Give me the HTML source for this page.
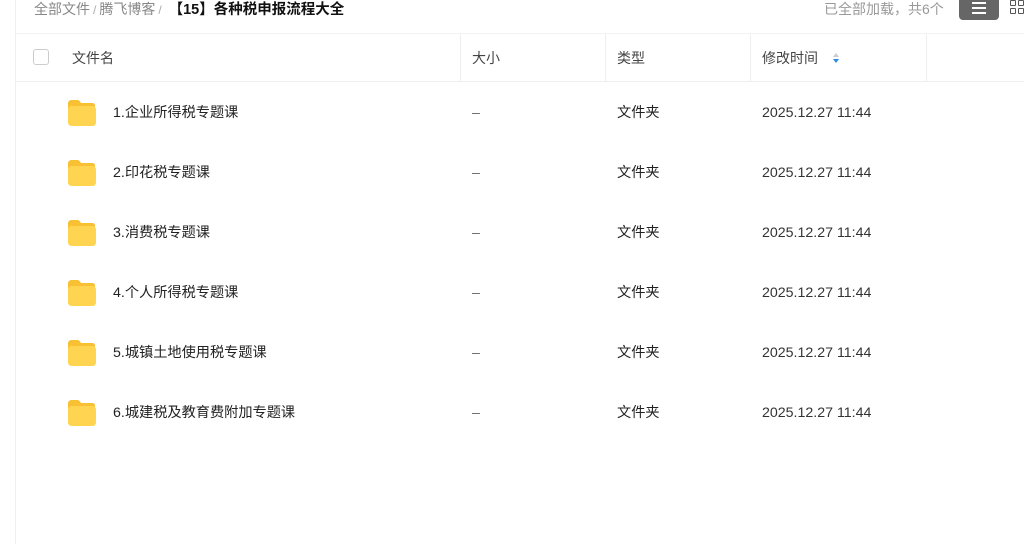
<!DOCTYPE html>
<html><head><meta charset="utf-8"><style>
*{margin:0;padding:0;box-sizing:border-box}
body{width:1024px;height:544px;background:#fff;font-family:"Liberation Sans","Noto Sans CJK SC",sans-serif;position:relative;overflow:hidden;color:#222}
.lb{position:absolute;left:15px;top:0;width:1px;height:544px;background:#eee}
.bc{position:absolute;left:34px;top:0;font-size:14px;line-height:18px;color:#888}
.bc b{color:#111;font-weight:bold;font-size:14.5px}
.bc .s{color:#aaa;font-size:12px;margin:0 3px}
.st{position:absolute;left:824px;top:0;font-size:14px;line-height:18px;color:#999}
.vb{position:absolute;left:959px;top:-4px;width:40px;height:24px;background:#666;border-radius:0 0 4px 4px}
.vb i{position:absolute;left:13px;width:14px;height:1.5px;background:#fff}
.gb{position:absolute;left:1009px;top:0;width:14px;height:16px}
.gb i{position:absolute;width:6px;height:6px;border:1.3px solid #555;border-radius:1px}
.hd{position:absolute;left:16px;top:33px;width:1008px;height:49px;border-top:1px solid #f2f2f2;border-bottom:1px solid #eee;font-size:14px;color:#444}
.hd span{position:absolute;top:14px}
.sep{position:absolute;top:0;width:1px;height:48px;background:#eee}
.cb{position:absolute;left:17px;top:15px;width:16px;height:16px;border:1px solid #ccc;border-radius:3px}
.row{position:absolute;left:16px;width:1008px;height:60px;font-size:14.2px;color:#222}
.row span{position:absolute;top:1px;line-height:18px}
.fd{position:absolute;left:51px;width:29px;height:26px}
</style></head><body>
<div class="lb"></div>
<div class="bc">全部文件<span class="s">/</span>腾飞博客<span class="s">/</span> <b>【15】各种税申报流程大全</b></div>
<div class="st">已全部加载，共6个</div>
<div class="vb"><i style="top:6px"></i><i style="top:11px"></i><i style="top:16px"></i></div>
<div class="gb"><i style="left:1px;top:0"></i><i style="left:9px;top:0"></i><i style="left:1px;top:8px"></i><i style="left:9px;top:8px"></i></div>
<div class="hd">
<div class="cb"></div>
<span style="left:56px">文件名</span>
<div class="sep" style="left:444px"></div>
<span style="left:456px">大小</span>
<div class="sep" style="left:589px"></div>
<span style="left:601px">类型</span>
<div class="sep" style="left:734px"></div>
<span style="left:746px">修改时间</span>
<svg style="position:absolute;left:816px;top:18px" width="8" height="12"><path d="M4 1L7 5H1Z" fill="#ccc"/><path d="M4 11L7 7H1Z" fill="#2a8ce8"/></svg>
<div class="sep" style="left:910px"></div>
</div>
<div id="rows"></div>
<script>
var n=["1.企业所得税专题课","2.印花税专题课","3.消费税专题课","4.个人所得税专题课","5.城镇土地使用税专题课","6.城建税及教育费附加专题课"],h="";
for(var i=0;i<6;i++){var y=103+i*60;h+='<div class="row" style="top:'+y+'px"><svg class="fd" style="top:-3px" viewBox="0 0 29 26"><path d="M1 4Q1 0 4.5 0H10.5Q12 0 13 1.5L14 3H25.5Q28 3 28 6V9H1Z" fill="#f7c133"/><rect x="1" y="6" width="28" height="20" rx="3.5" fill="#ffd450"/></svg><span style="left:97px">'+n[i]+'</span><span style="left:456px;color:#666">–</span><span style="left:601px">文件夹</span><span style="left:746px;color:#333">2025.12.27 11:44</span></div>';}
document.getElementById("rows").innerHTML=h;
</script>
</body></html>
